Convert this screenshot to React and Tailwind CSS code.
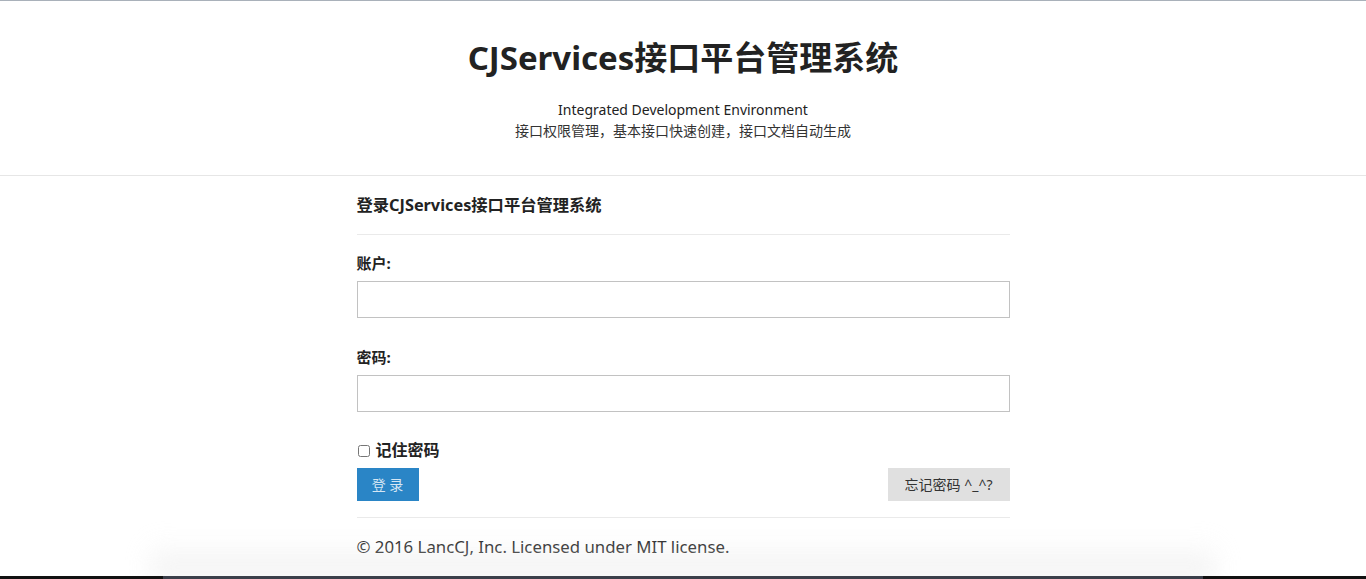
export default function App() {
  const font = { fontFamily: '"Noto Sans", "Noto Sans CJK SC", sans-serif' };
  return (
    <div className="relative min-h-[579px] w-full bg-white text-[#222] overflow-hidden" style={font}>
      <div className="h-px w-full bg-[#a9b1ba]" />
      <header className="border-b border-[#e6e6e6] pt-[37px] pb-[34px] text-center">
        <h1 className="text-[33px] font-bold leading-[40px] text-[#222]">CJServices接口平台管理系统</h1>
        <p className="mt-[22px] text-[14px] leading-[20px] text-[#222]">Integrated Development Environment</p>
        <p className="mt-px text-[14px] leading-[20px] text-[#333]">接口权限管理，基本接口快速创建，接口文档自动生成</p>
      </header>
      <main className="mx-auto w-[653px] pt-[18px]">
        <h2 className="text-[16.3px] font-bold leading-[22px] text-[#222]">登录CJServices接口平台管理系统</h2>
        <div className="mt-[18px] h-px bg-[#eaeaea]" />
        <label className="mt-[18px] block text-[15px] font-bold leading-[20px]">账户:</label>
        <input type="text" className="mt-[8px] block h-[37px] w-full border border-[#c2c2c2] bg-white px-2 outline-none" />
        <label className="mt-[29px] block text-[15px] font-bold leading-[20px]">密码:</label>
        <input type="password" className="mt-[8px] block h-[37px] w-full border border-[#c2c2c2] bg-white px-2 outline-none" />
        <div className="mt-[27px] flex items-center gap-[6px] leading-[22px]">
          <input type="checkbox" className="ml-px mt-[2px] h-[12px] w-[12px]" />
          <span className="text-[16px] font-bold">记住密码</span>
        </div>
        <div className="mt-[7px] flex items-center justify-between">
          <button className="h-[33px] w-[62px] bg-[#2a85c6] text-[14px] text-[#d5e6f4]">登 录</button>
          <button className="h-[33px] w-[122px] bg-[#e0e0e0] text-[14px] text-[#333]">忘记密码 ^_^?</button>
        </div>
        <div className="mt-[16px] h-px bg-[#eaeaea]" />
        <p className="mt-[17px] text-[16.8px] leading-[24px] text-[#222]">© 2016 LancCJ, Inc. Licensed under MIT license.</p>
      </main>
      <div className="pointer-events-none absolute bottom-0 left-[150px] right-[150px] h-[40px] bg-gradient-to-b from-transparent to-[#e8e8e8] opacity-70 blur-md" />
      <div className="pointer-events-none absolute bottom-0 left-0 right-0 h-[3px] bg-[#111]" />
      <div className="pointer-events-none absolute bottom-0 left-[163px] right-[163px] h-[3px] bg-[#3b3f4a]" />
    </div>
  );
}
